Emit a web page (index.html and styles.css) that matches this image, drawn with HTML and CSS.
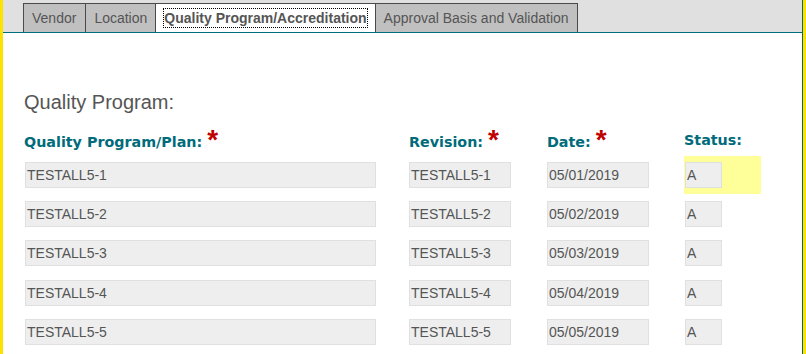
FILE: index.html
```html
<!DOCTYPE html>
<html>
<head>
    <title>Quality Program</title>
    <link rel="stylesheet" href="styles.css">
</head>
<body>
    <div class="frame">
        <div class="panel">
            <ul class="tabs">
                <li class="tab">Vendor</li>
                <li class="tab">Location</li>
                <li class="tab active"><span class="focus">Quality Program/Accreditation</span></li>
                <li class="tab">Approval Basis and Validation</li>
            </ul>

            <div class="content">
                <h2 class="section-title">Quality Program:</h2>

                <div class="grid head">
                    <label>Quality Program/Plan: <span class="req">*</span></label>
                    <label>Revision: <span class="req">*</span></label>
                    <label>Date: <span class="req">*</span></label>
                    <label class="plain">Status:</label>
                </div>

                <div class="grid row">
                    <div class="cell"><input class="f-plan" type="text" value="TESTALL5-1" readonly></div>
                    <div class="cell"><input class="f-rev" type="text" value="TESTALL5-1" readonly></div>
                    <div class="cell"><input class="f-date" type="text" value="05/01/2019" readonly></div>
                    <div class="cell status highlight"><input class="f-status" type="text" value="A" readonly></div>
                </div>
                <div class="grid row">
                    <div class="cell"><input class="f-plan" type="text" value="TESTALL5-2" readonly></div>
                    <div class="cell"><input class="f-rev" type="text" value="TESTALL5-2" readonly></div>
                    <div class="cell"><input class="f-date" type="text" value="05/02/2019" readonly></div>
                    <div class="cell status"><input class="f-status" type="text" value="A" readonly></div>
                </div>
                <div class="grid row">
                    <div class="cell"><input class="f-plan" type="text" value="TESTALL5-3" readonly></div>
                    <div class="cell"><input class="f-rev" type="text" value="TESTALL5-3" readonly></div>
                    <div class="cell"><input class="f-date" type="text" value="05/03/2019" readonly></div>
                    <div class="cell status"><input class="f-status" type="text" value="A" readonly></div>
                </div>
                <div class="grid row">
                    <div class="cell"><input class="f-plan" type="text" value="TESTALL5-4" readonly></div>
                    <div class="cell"><input class="f-rev" type="text" value="TESTALL5-4" readonly></div>
                    <div class="cell"><input class="f-date" type="text" value="05/04/2019" readonly></div>
                    <div class="cell status"><input class="f-status" type="text" value="A" readonly></div>
                </div>
                <div class="grid row">
                    <div class="cell"><input class="f-plan" type="text" value="TESTALL5-5" readonly></div>
                    <div class="cell"><input class="f-rev" type="text" value="TESTALL5-5" readonly></div>
                    <div class="cell"><input class="f-date" type="text" value="05/05/2019" readonly></div>
                    <div class="cell status"><input class="f-status" type="text" value="A" readonly></div>
                </div>
            </div>
        </div>
    </div>
</body>
</html>
```
FILE: styles.css
```css
html, body {
    margin: 0;
    padding: 0;
    background: #fff;
}
body {
    font-family: "Liberation Sans", Arial, sans-serif;
    color: #555;
}
.frame {
    height: 354px;
    border-left: 3px solid #ffe100;
    border-right: 3px solid #ffe100;
    box-sizing: border-box;
    overflow: hidden;
}
.panel {
    height: 100%;
    border-right: 1px solid #006d7c;
}
.tabs {
    list-style: none;
    margin: 0;
    padding: 3px 0 0 20px;
    height: 29px;
    display: flex;
    background-color: #e0e0e0;
    border-bottom: 1px solid #006d7c;
}
.tab {
    box-sizing: border-box;
    height: 29px;
    padding: 6px 8px 0 8px;
    font-size: 14px;
    line-height: 16px;
    background-color: #c0c0c0;
    border: 1px solid #4a4a4a;
    border-bottom: none;
    margin-left: -1px;
}
.tab:first-child {
    margin-left: 0;
    padding-right: 9px;
}
.tab.active {
    background-color: #fff;
    font-weight: bold;
    padding: 5px 8px 0 8px;
}
.focus {
    display: inline-block;
    outline: 1px dotted #000;
    outline-offset: 0;
    padding: 1px 0;
}
.content {
    padding: 0 0 0 21px;
}
.section-title {
    margin: 0;
    padding-top: 58px;
    font-size: 20px;
    font-weight: normal;
    line-height: 23px;
    color: #555;
}
.grid {
    display: grid;
    grid-template-columns: 385px 138px 137px 80px;
}
.head {
    height: 41px;
    align-items: end;
}
.head label {
    font-family: "DejaVu Sans", Verdana, sans-serif;
    font-weight: bold;
    font-size: 14.3px;
    color: #006b7a;
    line-height: 16px;
    padding-bottom: 5px;
}
.head label.plain {
    padding-bottom: 7px;
}
.req {
    font-family: "Liberation Sans", Arial, sans-serif;
    color: #c00000;
    font-size: 28px;
    line-height: 10px;
    position: relative;
    top: 2px;
}
.row {
    height: 39.3px;
    align-items: center;
}
.cell {
    display: flex;
    align-items: center;
    height: 38px;
}
.status {
    width: 77px;
    box-sizing: border-box;
}
.highlight {
    background-color: #ffff99;
}
input[type="text"] {
    box-sizing: border-box;
    height: 26px;
    margin: 0;
    padding: 0 0 0 1px;
    font-family: "Liberation Sans", Arial, sans-serif;
    font-size: 14px;
    color: #555;
    background-color: #eeeeee;
    border: 1px solid #e0e0e0;
    outline: none;
}
.f-plan {
    width: 351px;
    margin-left: 1px !important;
}
.f-rev,
.f-date {
    width: 102px;
}
.f-status {
    width: 37px;
    margin-left: 1px !important;
}
```
